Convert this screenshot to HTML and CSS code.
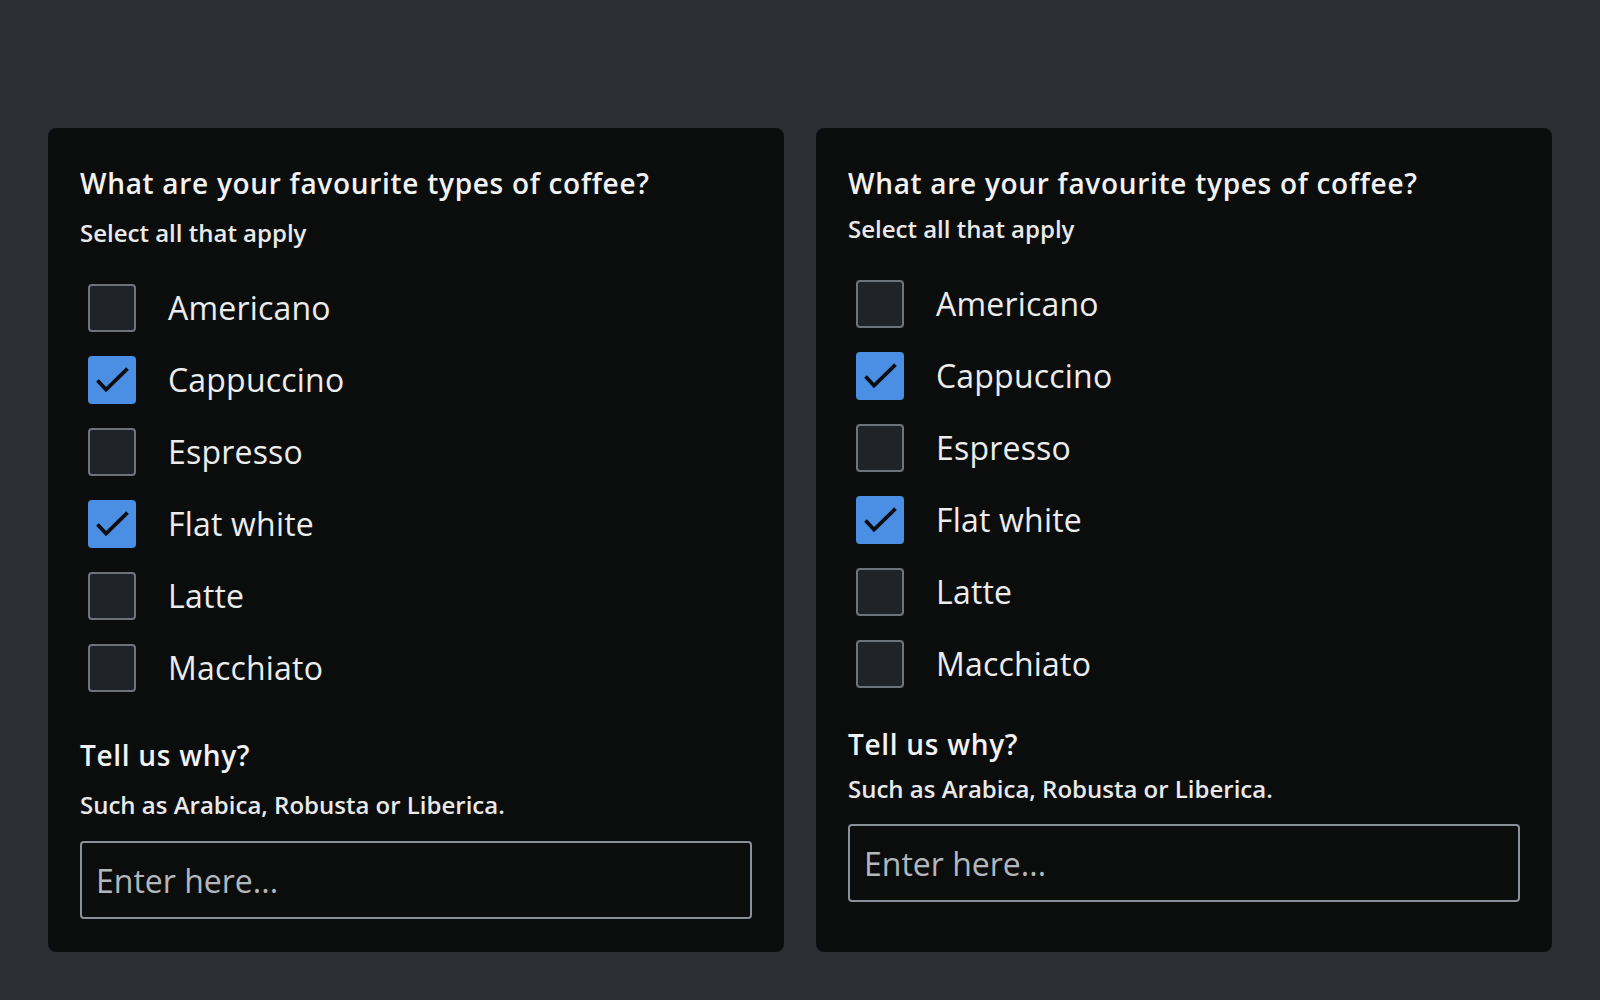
FILE: index.html
```html
<!DOCTYPE html>
<html lang="en">
<head>
<meta charset="utf-8">
<title>Coffee survey</title>
<link rel="stylesheet" href="styles.css">
</head>
<body>
<main class="page">
  <section class="card">
    <h2 class="title">What are your favourite types of coffee?</h2>
    <p class="hint">Select all that apply</p>
    <ul class="options">
      <li class="option"><span class="box"></span><span class="label-text">Americano</span></li>
      <li class="option"><span class="box checked"><svg viewBox="0 0 48 48" width="44" height="44"><polyline points="9.5,26 17.5,34.5 39.5,13" fill="none" stroke="#0b0d10" stroke-width="4" stroke-linecap="square"/></svg></span><span class="label-text">Cappuccino</span></li>
      <li class="option"><span class="box"></span><span class="label-text">Espresso</span></li>
      <li class="option"><span class="box checked"><svg viewBox="0 0 48 48" width="44" height="44"><polyline points="9.5,26 17.5,34.5 39.5,13" fill="none" stroke="#0b0d10" stroke-width="4" stroke-linecap="square"/></svg></span><span class="label-text">Flat white</span></li>
      <li class="option"><span class="box"></span><span class="label-text">Latte</span></li>
      <li class="option"><span class="box"></span><span class="label-text">Macchiato</span></li>
    </ul>
    <h3 class="why">Tell us why?</h3>
    <p class="why-hint">Such as Arabica, Robusta or Liberica.</p>
    <input class="field" type="text" placeholder="Enter here...">
  </section>
  <section class="card compact">
    <h2 class="title">What are your favourite types of coffee?</h2>
    <p class="hint">Select all that apply</p>
    <ul class="options">
      <li class="option"><span class="box"></span><span class="label-text">Americano</span></li>
      <li class="option"><span class="box checked"><svg viewBox="0 0 48 48" width="44" height="44"><polyline points="9.5,26 17.5,34.5 39.5,13" fill="none" stroke="#0b0d10" stroke-width="4" stroke-linecap="square"/></svg></span><span class="label-text">Cappuccino</span></li>
      <li class="option"><span class="box"></span><span class="label-text">Espresso</span></li>
      <li class="option"><span class="box checked"><svg viewBox="0 0 48 48" width="44" height="44"><polyline points="9.5,26 17.5,34.5 39.5,13" fill="none" stroke="#0b0d10" stroke-width="4" stroke-linecap="square"/></svg></span><span class="label-text">Flat white</span></li>
      <li class="option"><span class="box"></span><span class="label-text">Latte</span></li>
      <li class="option"><span class="box"></span><span class="label-text">Macchiato</span></li>
    </ul>
    <h3 class="why">Tell us why?</h3>
    <p class="why-hint">Such as Arabica, Robusta or Liberica.</p>
    <input class="field" type="text" placeholder="Enter here...">
  </section>
</main>
</body>
</html>
```
FILE: styles.css
```css
html, body {
  margin: 0;
  background: #2c2f34;
}
body {
  font-family: "Open Sans", "Noto Sans", sans-serif;
  color: #f0f0f0;
}
.page {
  display: grid;
  grid-template-columns: 1fr 1fr;
  gap: 32px;
  padding: 128px 48px 48px;
}
.card {
  background: #0b0d0d;
  border-radius: 8px;
  padding: 32px 32px 33px;
  display: flex;
  flex-direction: column;
}
.title {
  margin: 0;
  font-size: 28px;
  font-weight: 600;
  letter-spacing: 0.7px;
  line-height: 46px;
  color: #f2f2f2;
}
.hint {
  margin: 11px 0 0;
  font-size: 24px;
  font-weight: 600;
  line-height: 32px;
  color: #e9e9e9;
}
.options {
  list-style: none;
  margin: 23px 0 0;
  padding: 0 0 0 8px;
}
.option {
  height: 72px;
  display: flex;
  align-items: center;
  gap: 32px;
}
.box {
  width: 48px;
  height: 48px;
  box-sizing: border-box;
  border: 2px solid #6d737b;
  border-radius: 4px;
  background: #202327;
  display: flex;
  align-items: center;
  justify-content: center;
  flex: none;
}
.box.checked {
  background: #4a8fe3;
  border-color: #4a8fe3;
}
.box svg {
  display: block;
}
.label-text {
  font-size: 32px;
  line-height: 40px;
  letter-spacing: 0.2px;
  color: #ececec;
}
.why {
  margin: 31px 0 0;
  font-size: 28px;
  font-weight: 600;
  letter-spacing: 0.7px;
  line-height: 40px;
  color: #f2f2f2;
}
.why-hint {
  margin: 14px 0 0;
  font-size: 24px;
  font-weight: 600;
  line-height: 32px;
  color: #e9e9e9;
}
.field {
  margin-top: 20px;
  height: 78px;
  box-sizing: border-box;
  border: 2px solid #8a9098;
  border-radius: 4px;
  background: transparent;
  padding: 0 14px;
  font-family: "Open Sans", "Noto Sans", sans-serif;
  font-size: 32px;
  color: #f0f0f0;
  outline: none;
}
.field::placeholder {
  color: #b3b7bc;
  opacity: 1;
}
.compact .hint {
  margin-top: 7px;
}
.compact .why {
  margin-top: 24px;
}
.compact .why-hint {
  margin-top: 9px;
}
.compact .field {
  margin-top: 19px;
}
```
